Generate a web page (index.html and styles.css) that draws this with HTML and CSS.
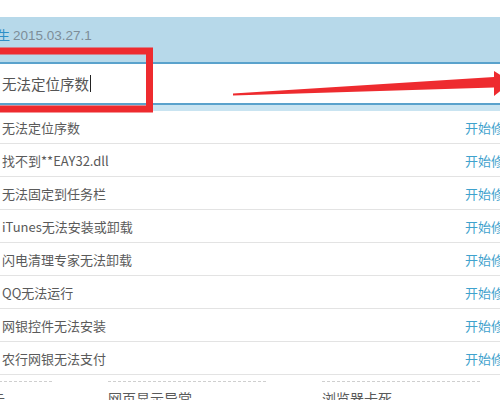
FILE: index.html
```html
<!DOCTYPE html>
<html lang="zh">
<head>
<meta charset="utf-8">
<link rel="stylesheet" href="styles.css">
</head>
<body>
<div class="page">
  <div class="header"><span class="hl">生</span> <span class="ver">2015.03.27.1</span></div>
  <div class="search"><span class="query">无法定位序数</span><span class="caret"></span></div>
  <div class="stripe"></div>
  <ul class="list">
    <li class="row"><span class="name">无法定位序数</span><span class="act">开始修复</span></li>
    <li class="row"><span class="name">找不到**EAY32.dll</span><span class="act">开始修复</span></li>
    <li class="row"><span class="name">无法固定到任务栏</span><span class="act">开始修复</span></li>
    <li class="row"><span class="name">iTunes无法安装或卸载</span><span class="act">开始修复</span></li>
    <li class="row"><span class="name">闪电清理专家无法卸载</span><span class="act">开始修复</span></li>
    <li class="row"><span class="name">QQ无法运行</span><span class="act">开始修复</span></li>
    <li class="row"><span class="name">网银控件无法安装</span><span class="act">开始修复</span></li>
    <li class="row"><span class="name">农行网银无法支付</span><span class="act">开始修复</span></li>
  </ul>
  <div class="more">
    <div class="col col-first"><span class="dash"></span><span class="ctext">电脑开机很卡</span></div>
    <div class="col"><span class="dash"></span><span class="ctext">网页显示异常</span></div>
    <div class="col"><span class="dash"></span><span class="ctext">浏览器卡死</span></div>
  </div>
  <svg class="marks" width="500" height="400" viewBox="0 0 500 400">
    <rect x="-20" y="51" width="169.5" height="58" fill="none" stroke="#ee2b2f" stroke-width="7"/>
    <polygon points="233,93.5 494,77 494,87.5 233,95.5" fill="#ee2b2f"/>
    <polygon points="494,71 512,82 494,96" fill="#ee2b2f"/>
  </svg>
</div>
</body>
</html>
```
FILE: styles.css
```css
html, body {
  margin: 0;
  padding: 0;
  background: #ffffff;
}
body {
  width: 500px;
  height: 400px;
  overflow: hidden;
  font-family: "Noto Sans CJK SC", "Noto Sans", sans-serif;
  font-size: 13px;
  color: #5a5a5a;
}
.page {
  position: relative;
  width: 500px;
  height: 400px;
  overflow: hidden;
}
.header {
  margin-top: 17px;
  height: 45px;
  background: #b7d9ea;
  line-height: 35px;
  margin-left: -3px;
  white-space: nowrap;
}
.hl {
  color: #2e8fc7;
}
.ver {
  color: #7d8d98;
  font-family: "Liberation Sans", "Noto Sans", sans-serif;
  font-size: 13.5px;
}
.search {
  height: 39px;
  border-top: 2px solid #5aa2cc;
  border-bottom: 2px solid #5aa2cc;
  background: #ffffff;
  display: flex;
  align-items: center;
  padding-left: 2px;
}
.query {
  color: #555555;
  font-size: 14.5px;
}
.caret {
  display: inline-block;
  width: 1px;
  height: 17px;
  background: #222222;
  margin-left: 1px;
}
.stripe {
  height: 6px;
  background: #c9e4f1;
}
.list {
  list-style: none;
  margin: 0;
  padding: 0;
}
.row {
  display: grid;
  grid-template-columns: 465px 80px;
  height: 32px;
  border-bottom: 1px solid #e3e3e3;
  align-items: center;
  padding-left: 2px;
  white-space: nowrap;
}
.row .name {
  color: #5a5a5a;
}
.act {
  color: #3fa2cd;
  margin-left: -2px;
}
.more {
  display: flex;
  gap: 56px;
  margin-left: -106px;
  padding-top: 6px;
}
.col {
  width: 158px;
  flex: 0 0 158px;
  display: flex;
  flex-direction: column;
}
.dash {
  display: block;
  height: 0;
  border-top: 1px dashed #cfcfcf;
}
.ctext {
  margin-top: 6px;
  color: #5a5a5a;
  white-space: nowrap;
  font-size: 14px;
}
.col-first .ctext {
  text-align: right;
  padding-right: 47px;
}
.marks {
  position: absolute;
  left: 0;
  top: 0;
  pointer-events: none;
}
```
